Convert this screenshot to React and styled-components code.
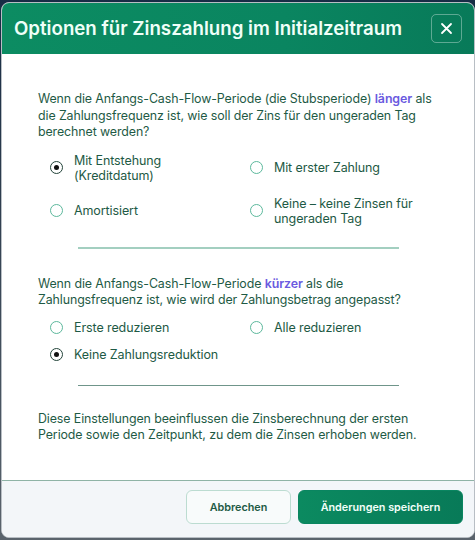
import React from 'react'
import styled, { createGlobalStyle } from 'styled-components'

const GlobalStyle = createGlobalStyle`
  html, body {
    margin: 0;
    padding: 0;
    background: #3a4450;
    font-family: Inter, 'Noto Sans', sans-serif;
  }
`

const Backdrop = styled.div`
  width: 475px;
  height: 540px;
  padding: 2px 0 2px 1px;
  box-sizing: border-box;
  background: linear-gradient(180deg, #172c45 0%, #2a3a4c 30%, #5b646d 100%);
`

const Modal = styled.div`
  display: flex;
  flex-direction: column;
  height: 100%;
  border-radius: 8px;
  overflow: hidden;
  background: #ffffff;
  border: 1px solid #b8bec4;
  box-sizing: border-box;
`

const Header = styled.div`
  display: flex;
  align-items: center;
  justify-content: space-between;
  height: 51px;
  padding: 0 12px;
  background: linear-gradient(90deg, #0c8c62 0%, #0a8560 60%, #087a59 100%);
  flex-shrink: 0;
`

const Title = styled.h2`
  margin: 0;
  font-size: 18.7px;
  font-weight: 600;
  color: #effff8;
`

const CloseButton = styled.button`
  display: flex;
  align-items: center;
  justify-content: center;
  width: 31px;
  height: 29px;
  padding: 0;
  border: 1px solid rgba(255, 255, 255, 0.35);
  border-radius: 5px;
  background: transparent;
  color: #ffffff;
`

const Body = styled.div`
  flex: 1;
  padding: 37px 36px 0 36px;
  color: #1e5a45;
`

const Paragraph = styled.p`
  margin: 0;
  font-size: 12.4px;
  letter-spacing: -0.1px;
  line-height: 16.5px;
  white-space: nowrap;
`

const Highlight = styled.strong`
  color: #6a5ae0;
  font-weight: 600;
`

const Options = styled.div`
  display: grid;
  grid-template-columns: 200px 1fr;
  row-gap: ${(p) => p.$gap}px;
  padding-left: 12px;
  margin-top: ${(p) => p.$top}px;
`

const Option = styled.label`
  display: flex;
  align-items: center;
  gap: 11px;
  font-size: 12.5px;
  letter-spacing: -0.1px;
  line-height: 15px;
`

const Radio = styled.span`
  flex-shrink: 0;
  width: 13px;
  height: 13px;
  box-sizing: border-box;
  border-radius: 50%;
  border: ${(p) => (p.$checked ? '1px solid #23443a' : '1.3px solid #5cb89c')};
  display: flex;
  align-items: center;
  justify-content: center;
  &::after {
    content: '';
    display: ${(p) => (p.$checked ? 'block' : 'none')};
    width: 5px;
    height: 5px;
    border-radius: 50%;
    background: #111;
  }
`

const Divider = styled.hr`
  width: 321px;
  margin: ${(p) => p.$margin};
  border: none;
  height: ${(p) => p.$size}px;
  background: ${(p) => p.$color};
`

const Footer = styled.div`
  display: flex;
  justify-content: flex-end;
  align-items: center;
  gap: 7px;
  height: 57px;
  padding: 0 11px 4px 0;
  box-sizing: border-box;
  background: #f3f6f9;
  border-top: 1px solid #8fb3a6;
  flex-shrink: 0;
`

const Button = styled.button`
  height: 34px;
  padding: 0;
  width: ${(p) => p.$width}px;
  border-radius: 6px;
  font-family: Inter, 'Noto Sans', sans-serif;
  font-size: 10.8px;
  font-weight: 600;
  border: 1px solid ${(p) => (p.$primary ? '#0a8560' : '#bcdcd1')};
  background: ${(p) => (p.$primary ? 'linear-gradient(90deg, #0b8a60, #087a58)' : '#f8fbfb')};
  color: ${(p) => (p.$primary ? '#f2fff9' : '#1e5a45')};
`

const CloseIcon = () => (
  <svg width="13" height="13" viewBox="0 0 13 13" fill="none">
    <path d="M2 2L11 11M11 2L2 11" stroke="currentColor" strokeWidth="1.8" strokeLinecap="round" />
  </svg>
)

const RadioOption = ({ checked, children }) => (
  <Option>
    <Radio $checked={checked} />
    <span>{children}</span>
  </Option>
)

const App = () => {
  return (
    <>
      <GlobalStyle />
      <Backdrop>
        <Modal>
          <Header>
            <Title>Optionen für Zinszahlung im Initialzeitraum</Title>
            <CloseButton aria-label="Schließen">
              <CloseIcon />
            </CloseButton>
          </Header>
          <Body>
            <Paragraph>
              Wenn die Anfangs-Cash-Flow-Periode (die Stubsperiode) <Highlight>länger</Highlight> als
              <br />
              die Zahlungsfrequenz ist, wie soll der Zins für den ungeraden Tag
              <br />
              berechnet werden?
            </Paragraph>
            <Options $top={12} $gap={13}>
              <RadioOption checked>
                Mit Entstehung
                <br />
                (Kreditdatum)
              </RadioOption>
              <RadioOption>Mit erster Zahlung</RadioOption>
              <RadioOption>Amortisiert</RadioOption>
              <RadioOption>
                Keine – keine Zinsen für
                <br />
                ungeraden Tag
              </RadioOption>
            </Options>
            <Divider $margin="21px auto 27px" $size={2} $color="#a3cfc0" />
            <Paragraph>
              Wenn die Anfangs-Cash-Flow-Periode <Highlight>kürzer</Highlight> als die
              <br />
              Zahlungsfrequenz ist, wie wird der Zahlungsbetrag angepasst?
            </Paragraph>
            <Options $top={11} $gap={12}>
              <RadioOption>Erste reduzieren</RadioOption>
              <RadioOption>Alle reduzieren</RadioOption>
              <RadioOption checked>Keine Zahlungsreduktion</RadioOption>
            </Options>
            <Divider $margin="23px auto 25px" $size={1} $color="#6f958a" />
            <Paragraph>
              Diese Einstellungen beeinflussen die Zinsberechnung der ersten
              <br />
              Periode sowie den Zeitpunkt, zu dem die Zinsen erhoben werden.
            </Paragraph>
          </Body>
          <Footer>
            <Button $width={105}>Abbrechen</Button>
            <Button $primary $width={165}>Änderungen speichern</Button>
          </Footer>
        </Modal>
      </Backdrop>
    </>
  )
}

export default App
